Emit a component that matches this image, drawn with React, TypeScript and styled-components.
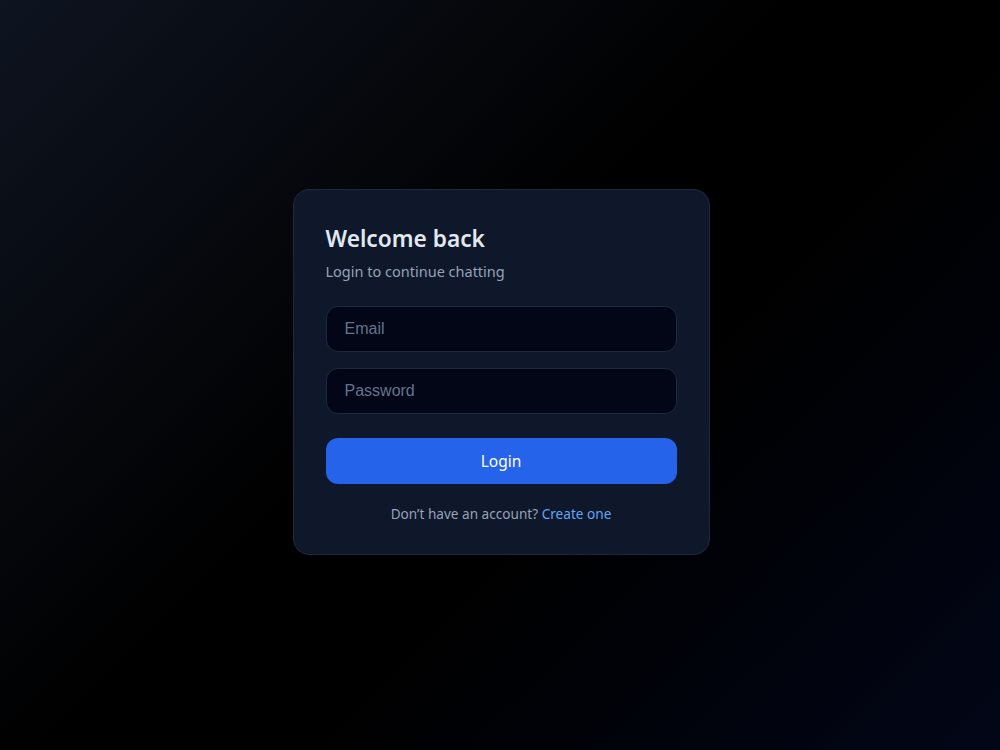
import React from 'react';
import styled, { createGlobalStyle } from 'styled-components';

const GlobalStyle = createGlobalStyle`
  html, body {
    margin: 0;
    padding: 0;
    height: 100%;
  }
  body {
    font-family: "Noto Sans", "Open Sans", sans-serif;
    background: #000;
  }
  * { box-sizing: border-box; }
`;

const Page = styled.div`
  min-height: 100vh;
  display: flex;
  align-items: center;
  justify-content: center;
  padding: 0 0 6px 2px;
  background: linear-gradient(135deg, #0e1420 0%, #000000 45%, #000000 60%, #020617 100%);
`;

const Card = styled.div`
  width: 417px;
  padding: 33px 32px 30px;
  background: #0f172a;
  border: 1px solid #1e293b;
  border-radius: 16px;
  display: flex;
  flex-direction: column;
`;

const Title = styled.h1`
  margin: 0;
  font-size: 22.7px;
  line-height: 32px;
  font-weight: 600;
  color: #e2e8f0;
`;

const Subtitle = styled.p`
  margin: 5px 0 0;
  font-size: 14.5px;
  line-height: 22px;
  color: #94a3b8;
`;

const Form = styled.form`
  margin-top: 24px;
  display: flex;
  flex-direction: column;
  gap: 16px;
`;

const Input = styled.input`
  height: 46px;
  width: 100%;
  padding: 0 18px;
  background: #020617;
  border: 1px solid #1e293b;
  border-radius: 12px;
  color: #e2e8f0;
  font-family: "Liberation Sans", Arial, sans-serif;
  font-size: 16px;
  outline: none;

  &::placeholder {
    color: #64748b;
  }
`;

const Button = styled.button`
  margin-top: 8px;
  height: 46px;
  border: none;
  border-radius: 12px;
  background: #2563eb;
  color: #fff;
  font-family: "Noto Sans", "Open Sans", sans-serif;
  font-size: 15.5px;
  font-weight: 400;
  cursor: pointer;
`;

const Footer = styled.p`
  margin: 20px 0 0;
  text-align: center;
  font-size: 13.6px;
  line-height: 20px;
  color: #94a3b8;

  a {
    color: #60a5fa;
    text-decoration: none;
  }
`;

export default function App() {
  return (
    <>
      <GlobalStyle />
      <Page>
        <Card>
          <Title>Welcome back</Title>
          <Subtitle>Login to continue chatting</Subtitle>
          <Form onSubmit={(e) => e.preventDefault()}>
            <Input type="email" placeholder="Email" />
            <Input type="password" placeholder="Password" />
            <Button type="submit">Login</Button>
          </Form>
          <Footer>
            Don’t have an account? <a href="#">Create one</a>
          </Footer>
        </Card>
      </Page>
    </>
  );
}
